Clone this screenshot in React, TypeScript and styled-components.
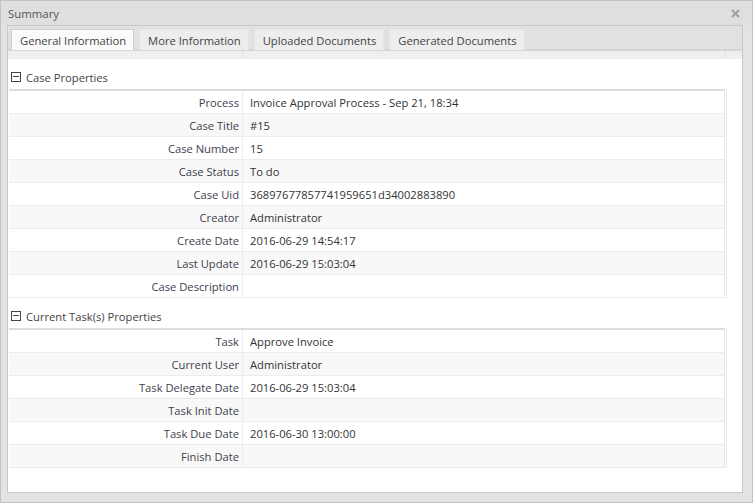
import React from 'react';
import styled, { createGlobalStyle } from 'styled-components';

const GlobalStyle = createGlobalStyle`
  html, body {
    margin: 0;
    padding: 0;
    background: #ffffff;
  }
  body {
    font-family: "Open Sans", "Liberation Sans", Arial, sans-serif;
    font-size: 11.2px;
  }
  * {
    box-sizing: border-box;
  }
`;

const Window = styled.div`
  width: 753px;
  height: 503px;
  border: 1px solid #c2c2c2;
  background: #e3e3e3;
  display: flex;
  flex-direction: column;
`;

const TitleBar = styled.div`
  height: 24px;
  flex: none;
  display: flex;
  align-items: center;
  justify-content: space-between;
  padding: 0 12px 0 7px;
  background: #dfdfdf;
  color: #555;
  font-size: 11.4px;
`;

const CloseButton = styled.button`
  border: 0;
  background: transparent;
  padding: 0;
  width: 10px;
  height: 10px;
  display: flex;
  align-items: center;
  justify-content: center;
  cursor: pointer;
`;

const Body = styled.div`
  flex: 1;
  display: flex;
  padding: 0 9px 9px 6px;
  min-height: 0;
`;

const Panel = styled.div`
  flex: 1;
  display: flex;
  flex-direction: column;
  border: 1px solid #c8c8c8;
  background: #ffffff;
  min-height: 0;
`;

const TabStrip = styled.div`
  height: 25px;
  flex: none;
  display: flex;
  align-items: flex-end;
  gap: 5px;
  padding: 2px 0 0 3px;
  background: #e1e1e1;
  border-bottom: 2px solid #d6d6d6;
`;

const Tab = styled.div<{ $active?: boolean }>`
  height: 21px;
  margin-bottom: -1px;
  padding: 0 7px 0 8px;
  display: flex;
  align-items: center;
  color: #444;
  white-space: nowrap;
  background: ${(p) => (p.$active ? '#fafafa' : '#ededed')};
  border: 1px solid ${(p) => (p.$active ? '#cfcfcf' : '#e4e4e4')};
  border-bottom: none;
`;

const HeaderStrip = styled.div`
  height: 8px;
  flex: none;
  display: flex;
  background: #efefef;
`;

const HeaderCell = styled.div<{ $w?: number }>`
  ${(p) => (p.$w ? `width: ${p.$w}px; flex: none;` : 'flex: 1;')}
  border-right: 1px solid #e0e0e0;
  &:last-child {
    border-right: none;
  }
`;

const Content = styled.div`
  flex: 1;
  overflow: hidden;
  padding-left: 1px;
`;

const GroupHeader = styled.div`
  height: 30px;
  padding: 11px 0 0 2px;
  display: flex;
  align-items: flex-start;
  gap: 5px;
  color: #444;
  line-height: 16px;
`;

const Collapse = styled.span`
  width: 10px;
  height: 10px;
  margin-top: 2px;
  border: 1px solid #444;
  position: relative;
  flex: none;
  &::after {
    content: '';
    position: absolute;
    left: 1px;
    right: 1px;
    top: 3px;
    height: 1px;
    background: #444;
  }
`;

const GroupBody = styled.div`
  display: flex;
`;

const Table = styled.div`
  width: 716px;
  flex: none;
  border-top: 2px solid #dcdcdc;
  border-right: 1px solid #e8e8e8;
`;

const Gutter = styled.div`
  flex: 1;
  margin-left: 1px;
  border-left: 1px solid #e8e8e8;
`;

const Row = styled.div<{ $alt: boolean }>`
  height: 23px;
  display: flex;
  background: ${(p) => (p.$alt ? '#f8f8f8' : '#ffffff')};
  border-bottom: 1px solid #ececec;
`;

const Label = styled.div`
  width: 234px;
  flex: none;
  padding-right: 3px;
  display: flex;
  align-items: center;
  justify-content: flex-end;
  color: #3e3e4c;
  border-right: 1px solid #ececec;
  white-space: nowrap;
`;

const Value = styled.div`
  flex: 1;
  padding-left: 7px;
  display: flex;
  align-items: center;
  color: #333;
  white-space: nowrap;
`;

type Field = [string, string];

const caseFields: Field[] = [
  ['Process', 'Invoice Approval Process - Sep 21, 18:34'],
  ['Case Title', '#15'],
  ['Case Number', '15'],
  ['Case Status', 'To do'],
  ['Case Uid', '36897677857741959651d34002883890'],
  ['Creator', 'Administrator'],
  ['Create Date', '2016-06-29 14:54:17'],
  ['Last Update', '2016-06-29 15:03:04'],
  ['Case Description', ''],
];

const taskFields: Field[] = [
  ['Task', 'Approve Invoice'],
  ['Current User', 'Administrator'],
  ['Task Delegate Date', '2016-06-29 15:03:04'],
  ['Task Init Date', ''],
  ['Task Due Date', '2016-06-30 13:00:00'],
  ['Finish Date', ''],
];

const tabs = ['General Information', 'More Information', 'Uploaded Documents', 'Generated Documents'];

const Group = ({ title, fields }: { title: string; fields: Field[] }) => (
  <>
    <GroupHeader>
      <Collapse />
      <span>{title}</span>
    </GroupHeader>
    <GroupBody>
      <Table>
        {fields.map(([label, value], i) => (
          <Row key={label} $alt={i % 2 === 1}>
            <Label>{label}</Label>
            <Value>{value}</Value>
          </Row>
        ))}
      </Table>
      <Gutter />
    </GroupBody>
  </>
);

export default function App() {
  return (
    <>
      <GlobalStyle />
      <Window>
        <TitleBar>
          <span>Summary</span>
          <CloseButton aria-label="close">
            <svg width="9" height="9" viewBox="0 0 9 9">
              <path d="M1 1L8 8M8 1L1 8" stroke="#a0a0a0" strokeWidth="2" />
            </svg>
          </CloseButton>
        </TitleBar>
        <Body>
          <Panel>
            <TabStrip>
              {tabs.map((t, i) => (
                <Tab key={t} $active={i === 0}>
                  {t}
                </Tab>
              ))}
            </TabStrip>
            <HeaderStrip>
              <HeaderCell $w={235} />
              <HeaderCell $w={483} />
              <HeaderCell />
            </HeaderStrip>
            <Content>
              <Group title="Case Properties" fields={caseFields} />
              <Group title="Current Task(s) Properties" fields={taskFields} />
            </Content>
          </Panel>
        </Body>
      </Window>
    </>
  );
}
